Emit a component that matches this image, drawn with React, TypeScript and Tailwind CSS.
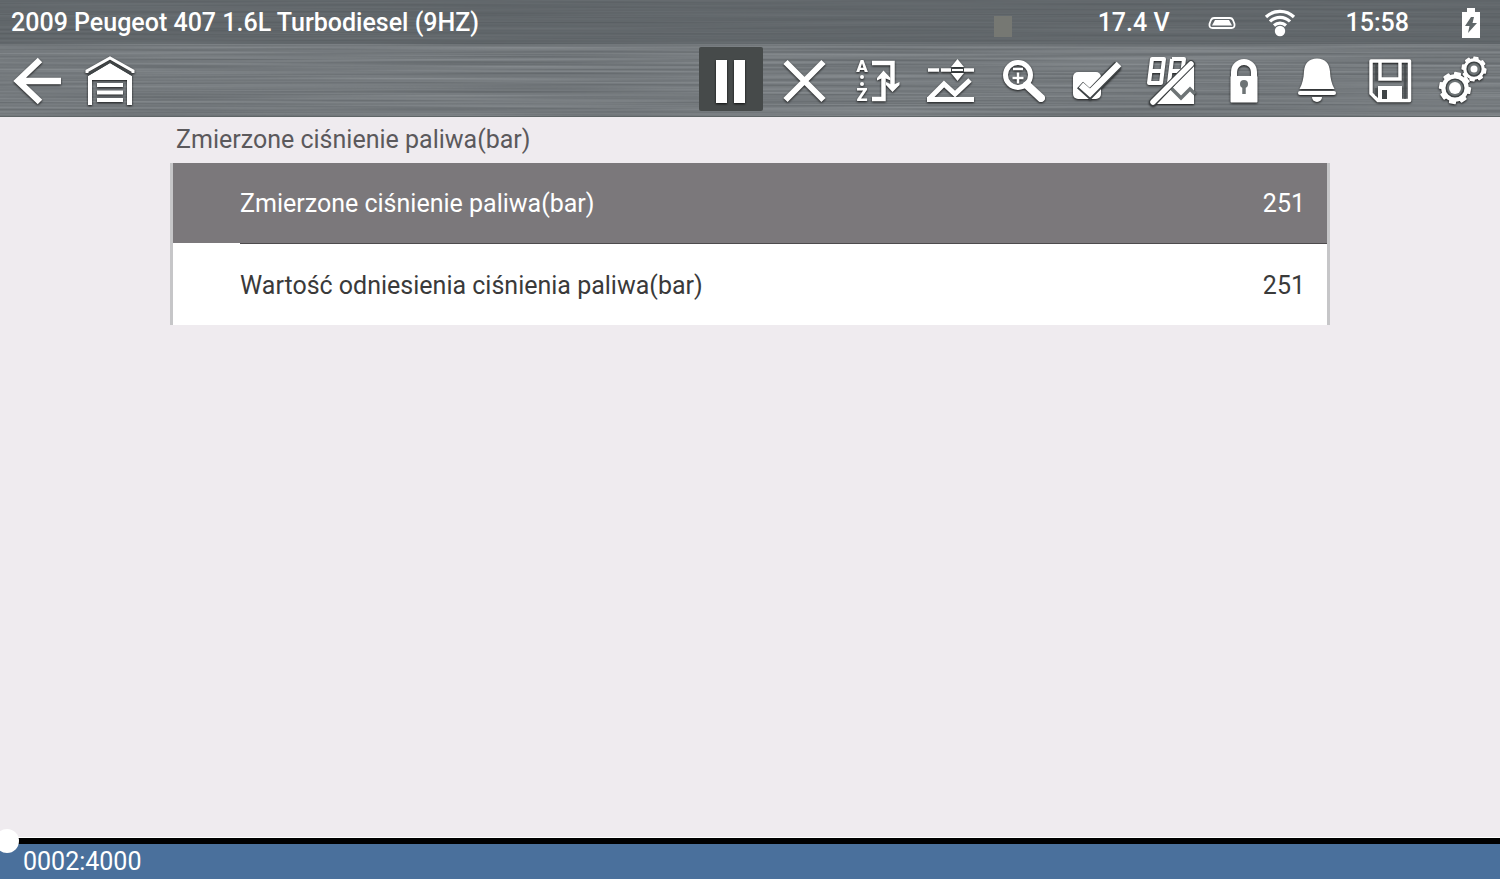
import React, { useState } from 'react'
import clsx from 'clsx'

interface Reading {
	id: string
	label: string
	value: number
}

const readings: Reading[] = [
	{ id: 'measured', label: 'Zmierzone ciśnienie paliwa(bar)', value: 251 },
	{ id: 'reference', label: 'Wartość odniesienia ciśnienia paliwa(bar)', value: 251 }
]

const DARK = '#3f4446'
const METAL = '#6d7375'

function Gear({ cx, cy, r, core }: { cx: number; cy: number; r: number; core: number }) {
	return (
		<g transform={`translate(${cx} ${cy})`}>
			{[0, 45, 90, 135, 180, 225, 270, 315].map(a => (
				<rect key={a} x={-r * 0.22} y={-r} width={r * 0.44} height={r * 0.4} rx="1" transform={`rotate(${a + 10})`} fill="#fff" />
			))}
			<circle r={r * 0.7} fill="none" stroke="#fff" strokeWidth={r * 0.32} />
			<circle r={r * 0.55} fill={METAL} stroke={DARK} strokeWidth="1.5" />
			<circle r={core} fill="#fff" />
		</g>
	)
}

const icons = {
	back: <path d="M35 13 13 34l22 21M12 34h44" fill="none" stroke="#fff" strokeWidth="6.5" />,
	garage: (
		<>
			<path d="M9 26v-2L32 11l23 13v2" fill="none" stroke="#fff" strokeWidth="3" />
			<path d="M10 29 32 16l22 13v29h-5V33H14v25h-4z" fill="#fff" />
			<path d="M10 28 32 15l22 13" fill="none" stroke={DARK} strokeWidth="1.5" />
			<path d="M19 38h26M19 45.500h26M19 53h26" stroke="#fff" strokeWidth="4" />
		</>
	),
	pause: <path d="M17 13h11v43H17zM35 13h11v43H35z" fill="#fff" />,
	clear: <path d="m13.500 15 38 38m0-38-38 38" stroke="#fff" strokeWidth="6" />,
	sort: (
		<>
			<text x="17" y="25" textAnchor="middle" className="font-black text-[17px]" fill="#fff">A</text>
			<text x="17" y="54" textAnchor="middle" className="font-black text-[18px]" fill="#fff">Z</text>
			<circle cx="17" cy="30" r="2" fill="#fff" />
			<circle cx="17" cy="37" r="2" fill="#fff" />
			<path d="M27 16h20.500v22M27 52h11.500V30" fill="none" stroke="#fff" strokeWidth="4.500" />
			<path d="m41 35 6.500 3 7-3v3l-7 7-6.500-7zM32 31l6.500-7.500 7 7.500v2.500l-7-3-6.500 3z" fill="#fff" />
		</>
	),
	trend: (
		<>
			<path d="M10 23h11M23 23h11M45 23h11" stroke="#fff" strokeWidth="3.500" />
			<path d="m39.500 12 6.500 8H33zM39.500 34l6.500-8H33z" fill="#fff" />
			<path d="M33 20.500h13v5H33z" fill={DARK} />
			<path d="M34 22h11v2H34z" fill="#fff" />
			<path d="m11 52 15-15 11 10 15-14" fill="none" stroke="#fff" strokeWidth="5" />
			<path d="M9 52.500h47" stroke="#fff" strokeWidth="5" />
		</>
	),
	zoom: (
		<>
			<path d="m36 38 14 13" stroke="#fff" strokeWidth="8" strokeLinecap="round" />
			<circle cx="27" cy="28" r="12.500" fill="none" stroke="#fff" strokeWidth="5" />
			<path d="M22 22h10M21.500 31h11M27 25.500v11" stroke="#fff" strokeWidth="2.500" />
		</>
	),
	check: (
		<>
			<rect x="9" y="25" width="28" height="27" rx="5" fill="#fff" />
			<path d="m16 38 10 9 28-29" fill="none" stroke={DARK} strokeWidth="9" />
			<path d="m17 38 9 8 29-29" fill="none" stroke="#fff" strokeWidth="6.500" />
		</>
	),
	display: (
		<>
			<path d="M15 12h12l-3 24H12zM13.500 24h12M35 12h12l-1.500 12h-12M32 36l3-24M32 36h10" fill="none" stroke="#fff" strokeWidth="4" strokeLinejoin="round" />
			<path d="M57 18v39H20z" fill="#fff" />
			<path d="m34 41 10 10 9-9 5 5" fill="none" stroke={METAL} strokeWidth="3.500" />
			<path d="m16 55 38-38" stroke={DARK} strokeWidth="7.500" strokeLinecap="round" />
			<path d="m16 55 38-38" stroke="#fff" strokeWidth="5.500" strokeLinecap="round" />
		</>
	),
	lock: (
		<>
			<path d="M24 31v-6a10 10 0 0 1 20 0v6" fill="none" stroke="#fff" strokeWidth="6" />
			<rect x="20.500" y="29" width="27" height="26.500" rx="1" fill="#fff" />
			<circle cx="34" cy="37" r="4" fill={METAL} />
			<path d="M34 37v10" stroke={METAL} strokeWidth="3.500" />
		</>
	),
	bell: (
		<>
			<path d="M34 11.500c8 0 12.500 5 13 13 .4 7 1.500 12 4.500 17.500h-35c3-5.500 4.100-10.500 4.500-17.500.5-8 5-13 13-13z" fill="#fff" />
			<path d="M17 46h34" stroke="#fff" strokeWidth="4" strokeLinecap="round" />
			<path d="M29 50h10a5 5 0 0 1-10 0z" fill="#fff" />
		</>
	),
	save: (
		<>
			<path d="M15 14h38.500v39.500H22l-7-7z" fill="none" stroke="#fff" strokeWidth="3.500" strokeLinejoin="round" />
			<path d="M24 14v18h20V14" fill="none" stroke="#fff" strokeWidth="3.500" />
			<path d="M20 16v18M49 16v36M20 41v8" stroke={DARK} strokeWidth="1" />
			<path d="M22 39h24v15H22z" fill="#fff" />
			<path d="M26 43h5v9h-5z" fill={DARK} />
		</>
	),
	settings: (
		<>
			<Gear cx={45} cy={22} r={12.5} core={3.5} />
			<Gear cx={26} cy={41} r={16} core={6} />
		</>
	)
}

type IconName = keyof typeof icons

function ToolButton({ icon, label, active, onClick }: { icon: IconName; label: string; active?: boolean; onClick?: () => void }) {
	return (
		<button type="button" aria-label={label} onClick={onClick} className={clsx('size-16 shrink-0 rounded-xs', active && 'bg-[#464a4a]')}>
			<svg viewBox="0 0 64 64" className="size-16 drop-shadow-[0_1px_1px_rgba(0,0,0,0.8)]" aria-hidden="true">
				{icons[icon]}
			</svg>
		</button>
	)
}

// Brushed metal: noise stretched along the x axis
function BrushedMetal() {
	return (
		<svg className="absolute inset-0 h-full w-full opacity-20" aria-hidden="true">
			<filter id="brushed" x="0" y="0" width="100%" height="100%" colorInterpolationFilters="sRGB">
				<feTurbulence type="fractalNoise" baseFrequency="0.003 0.45" numOctaves="2" seed="7" />
				<feColorMatrix values="1 0 0 0 -0.06  1 0 0 0 -0.04  1 0 0 0 -0.03  0 0 0 0 1" />
			</filter>
			<rect width="100%" height="100%" filter="url(#brushed)" />
		</svg>
	)
}

const tools: { icon: IconName; label: string }[] = [
	{ icon: 'clear', label: 'Clear' },
	{ icon: 'sort', label: 'Sort' },
	{ icon: 'trend', label: 'Trigger' },
	{ icon: 'zoom', label: 'Zoom' },
	{ icon: 'check', label: 'Select' },
	{ icon: 'display', label: 'Display mode' },
	{ icon: 'lock', label: 'Lock' },
	{ icon: 'bell', label: 'Alarm' },
	{ icon: 'save', label: 'Save' },
	{ icon: 'settings', label: 'Settings' }
]

export default function App() {
	const [selected, setSelected] = useState('measured')
	const [paused, setPaused] = useState(true)
	const [frame, setFrame] = useState(2)

	return (
		<div className="flex min-h-screen flex-col bg-[#efebef] font-[Roboto,sans-serif] text-[25px]">
			<header className="relative isolate bg-[#777c80] text-white">
				<BrushedMetal />
				<div className="relative flex h-11 items-center justify-between bg-[#4d5457]/50 pt-px pr-5 pl-[11px] font-medium">
					<h1>2009 Peugeot 407 1.6L Turbodiesel (9HZ)</h1>
					<div className="flex items-center">
						<span className="mt-2 mr-[86px] h-[21px] w-[18px] bg-[#767873]" />
						<span className="mr-[38px]">17.4 V</span>
						<svg viewBox="0 0 28 14" className="mr-7 h-3.5 w-7" aria-hidden="true">
							<path d="M6 2h16q2 0 3 2l1.500 4q.5 4-3 4H4.500q-3.500 0-3-4L3 4q1-2 3-2z" fill="none" stroke="#fff" strokeWidth="1.800" />
							<path d="M7 4h14l3 5.500H4z" fill="#fff" />
						</svg>
						<svg viewBox="0 0 32 30" className="mr-[50px] h-[30px] w-8" aria-hidden="true">
							<path d="M2 9a20 20 0 0 1 28 0M6 13.500a14 14 0 0 1 20 0M10 17.500a9 9 0 0 1 12 0" fill="none" stroke="#fff" strokeWidth="3.200" />
							<circle cx="16" cy="23" r="5.200" fill="#fff" />
						</svg>
						<span className="mr-[53px]">15:58</span>
						<svg viewBox="0 0 18 30" className="h-[30px] w-[18px]" aria-hidden="true">
							<path d="M5 0h8v4h5v26H0V4h5z" fill="#fff" />
							<path d="m9 9-6 9h4.500L6 25l9-10h-4.500L12 9z" fill="#5f6769" />
						</svg>
					</div>
				</div>
				<nav className="relative flex justify-between gap-[9px] border-b border-[#5f6567] pt-[3px] pr-[7px] pb-[5px] pl-[5px]">
					<div className="flex gap-[9px]">
						<ToolButton icon="back" label="Back" />
						<ToolButton icon="garage" label="Home" />
					</div>
					<div className="flex gap-[9px]">
						<ToolButton icon="pause" label="Pause" active={paused} onClick={() => setPaused(!paused)} />
						{tools.map(t => (
							<ToolButton key={t.icon} icon={t.icon} label={t.label} />
						))}
					</div>
				</nav>
			</header>

			<main className="mx-auto w-full max-w-[1160px] flex-1">
				<table className="w-full border-separate border-spacing-0 border-x-[3px] border-[#c6c6c8]">
					<caption className="pl-1.5 text-left leading-[46px] text-[#5b595c]">Zmierzone ciśnienie paliwa(bar)</caption>
					<tbody>
						{readings.map((r, i) => {
							const active = r.id === selected
							const line = i < readings.length - 1
							return (
								<tr
									key={r.id}
									onClick={() => setSelected(r.id)}
									className={active ? 'bg-[#7b787b] text-white' : 'bg-white text-[#3a3a3a]'}
								>
									<td className={clsx('w-[67px]', line && 'border-b border-white')} />
									<th scope="row" className={clsx('h-[81px] pt-0.5 text-left font-normal', line && 'border-b border-[#4d4b4d]')}>
										{r.label}
									</th>
									<td className={clsx('pt-0.5 pr-[22px] text-right', line && 'border-b border-[#4d4b4d]')}>{r.value}</td>
								</tr>
							)
						})}
					</tbody>
				</table>
			</main>

			<footer className="bg-[#4a709c] text-white">
				<div className="overflow-x-clip border-t border-white">
					<input
						type="range"
						aria-label="Frame"
						min={2}
						max={4000}
						value={frame}
						onChange={e => setFrame(Number(e.target.value))}
						className="-mx-[5px] block h-1.5 w-[calc(100%+10px)] appearance-none bg-black [&::-webkit-slider-thumb]:size-6 [&::-webkit-slider-thumb]:appearance-none [&::-webkit-slider-thumb]:rounded-full [&::-webkit-slider-thumb]:bg-white"
					/>
				</div>
				<p className="pl-[23px] leading-[35px]">{String(frame).padStart(4, '0')}:4000</p>
			</footer>
		</div>
	)
}
